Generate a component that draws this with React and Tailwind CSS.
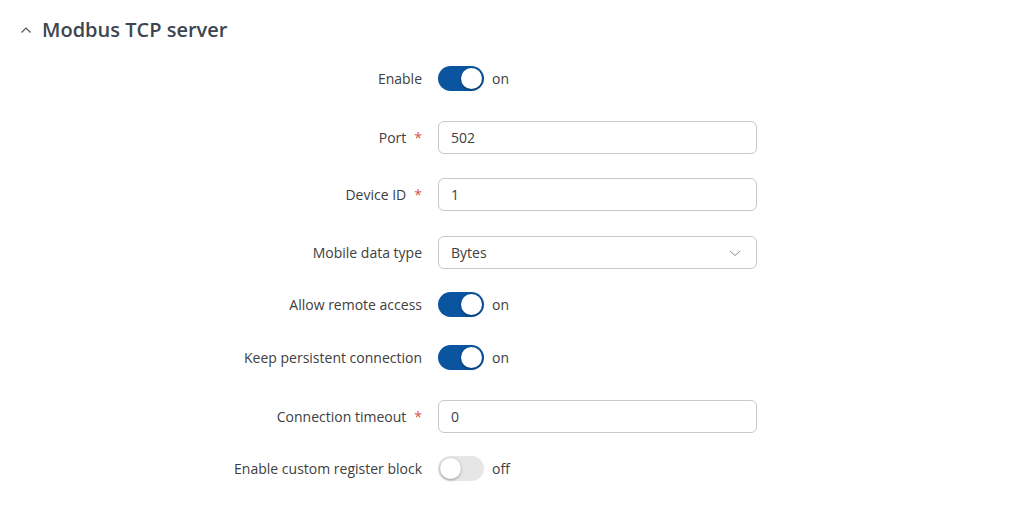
import { useState } from 'react';

const Toggle = ({ on, onChange }) => (
  <div className="flex items-center">
    <button
      type="button"
      onClick={onChange}
      className={`relative w-[46px] h-[25px] rounded-full transition-colors ${on ? 'bg-[#0b54a0]' : 'bg-[#e6e6e6]'}`}
    >
      <span
        className={`absolute top-[2px] w-[21px] h-[21px] rounded-full bg-white shadow-[0_1px_3px_rgba(0,0,0,0.35)] ${on ? 'left-[23px]' : 'left-[2px]'}`}
      />
    </button>
    <span className="ml-[8px] text-[14px] text-[#404040]">{on ? 'on' : 'off'}</span>
  </div>
);

// mt values follow the uneven spacing of the original form
const Row = ({ label, required, className, children }) => (
  <div className={`flex items-center ${className}`}>
    <div className="w-[422px] flex justify-end items-center text-[14px] text-[#404040]">
      <span>{label}</span>
      {required && <span className="ml-[8px] text-[#d9534f]">*</span>}
    </div>
    <div className="ml-[16px]">{children}</div>
  </div>
);

const TextInput = ({ value, onChange }) => (
  <input
    value={value}
    onChange={e => onChange(e.target.value)}
    className="w-[319px] h-[33px] px-3 rounded-[6px] border border-[#c8c8c8] text-[14px] text-[#404040] bg-white focus:outline-none"
  />
);

export default function App() {
  const [enable, setEnable] = useState(true);
  const [port, setPort] = useState('502');
  const [deviceId, setDeviceId] = useState('1');
  const [remote, setRemote] = useState(true);
  const [persistent, setPersistent] = useState(true);
  const [timeout, setTimeoutVal] = useState('0');
  const [custom, setCustom] = useState(false);

  return (
    <div className="min-h-screen bg-white" style={{ fontFamily: '"Open Sans", "Noto Sans", sans-serif' }}>
      <div className="flex items-center pl-[20px] pt-[16px] h-[44px]">
        <svg width="12" height="8" viewBox="0 0 12 8" className="mr-[10px]">
          <path d="M1.5 6.5 L6 2 L10.5 6.5" fill="none" stroke="#555" strokeWidth="1.2" />
        </svg>
        <h2 className="text-[20px] font-semibold text-[#3d4650]">Modbus TCP server</h2>
      </div>

      <div className="flex flex-col pt-[22px]">
        <Row label="Enable">
          <Toggle on={enable} onChange={() => setEnable(!enable)} />
        </Row>
        <Row label="Port" required className="mt-[30px]">
          <TextInput value={port} onChange={setPort} />
        </Row>
        <Row label="Device ID" required className="mt-[24px]">
          <TextInput value={deviceId} onChange={setDeviceId} />
        </Row>
        <Row label="Mobile data type" className="mt-[25px]">
          <div className="relative w-[319px] h-[33px] rounded-[6px] border border-[#c8c8c8] flex items-center px-3 text-[14px] text-[#404040]">
            Bytes
            <svg width="12" height="7" viewBox="0 0 12 7" className="absolute right-[15px] top-[13px]">
              <path d="M1 1 L6 5.5 L11 1" fill="none" stroke="#8a8a8a" strokeWidth="1" />
            </svg>
          </div>
        </Row>
        <Row label="Allow remote access" className="mt-[23px]">
          <Toggle on={remote} onChange={() => setRemote(!remote)} />
        </Row>
        <Row label="Keep persistent connection" className="mt-[28px]">
          <Toggle on={persistent} onChange={() => setPersistent(!persistent)} />
        </Row>
        <Row label="Connection timeout" required className="mt-[30px]">
          <TextInput value={timeout} onChange={setTimeoutVal} />
        </Row>
        <Row label="Enable custom register block" className="mt-[23px]">
          <Toggle on={custom} onChange={() => setCustom(!custom)} />
        </Row>
      </div>
    </div>
  );
}
